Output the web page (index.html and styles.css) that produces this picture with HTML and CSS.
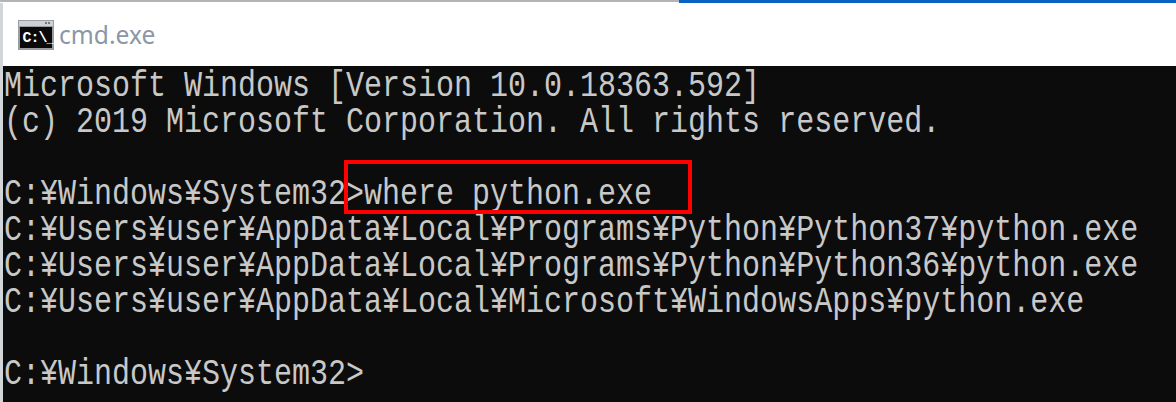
FILE: index.html
```html
<!DOCTYPE html>
<html lang="ja">
<head>
<meta charset="utf-8">
<title>cmd.exe</title>
<link rel="stylesheet" href="styles.css">
</head>
<body>
<div class="accent-row"><div class="accent-gray"></div><div class="accent-blue"></div></div>
<div class="window">
  <header class="titlebar">
    <svg class="icon" viewBox="0 0 36 30" aria-hidden="true">
      <rect width="36" height="30" fill="#9a9da1"/>
      <rect x="1" y="1" width="34" height="5" fill="#cdd0d4"/>
      <rect x="27" y="2" width="2" height="2" fill="#77797c"/>
      <rect x="30" y="2" width="2" height="2" fill="#77797c"/>
      <rect x="2" y="7" width="32" height="21" fill="#0a0a0a"/>
      <text x="4.5" y="22" class="icon-text">C:\_</text>
    </svg>
    <span class="title">cmd.exe</span>
  </header>
  <main class="console">
    <div class="lines">
      <div class="line">Microsoft Windows [Version 10.0.18363.592]</div>
      <div class="line">(c) 2019 Microsoft Corporation. All rights reserved.</div>
      <div class="line">&nbsp;</div>
      <div class="line">C:¥Windows¥System32&gt;where python.exe</div>
      <div class="line">C:¥Users¥user¥AppData¥Local¥Programs¥Python¥Python37¥python.exe</div>
      <div class="line">C:¥Users¥user¥AppData¥Local¥Programs¥Python¥Python36¥python.exe</div>
      <div class="line">C:¥Users¥user¥AppData¥Local¥Microsoft¥WindowsApps¥python.exe</div>
      <div class="line">&nbsp;</div>
      <div class="line">C:¥Windows¥System32&gt;</div>
    </div>
    <div class="highlight"></div>
  </main>
</div>
</body>
</html>
```
FILE: styles.css
```css
html, body { margin: 0; padding: 0; background: #fff; }
body { width: 1176px; height: 402px; overflow: hidden; }
.accent-row { display: flex; height: 3px; }
.accent-gray { width: 679px; height: 2px; background: #b4b4b4; }
.accent-blue { flex: 1; background: #0a62c4; }
.window { border-left: 3px solid #d2d6d8; }
.titlebar { height: 63px; display: flex; align-items: center; padding-left: 15px; gap: 5px; background: #fff; }
.icon { width: 36px; height: 30px; }
.icon-text { font: bold 15px "Liberation Mono", monospace; letter-spacing: -1px; fill: #fff; }
.title { font: 24.6px "Noto Sans", sans-serif; color: #8a97a6; }
.console { position: relative; height: 336px; background: #0c0c0c; }
.lines { padding: 2px 0 0 1px; transform: scaleY(1.25); transform-origin: 0 0; }
.line { font: 30px/28.8px "Liberation Mono", monospace; color: #c8c8c8; white-space: pre; }
.highlight { position: absolute; left: 341px; top: 94px; width: 348px; height: 54px; border: 4px solid #ff0000; box-sizing: border-box; }
```
